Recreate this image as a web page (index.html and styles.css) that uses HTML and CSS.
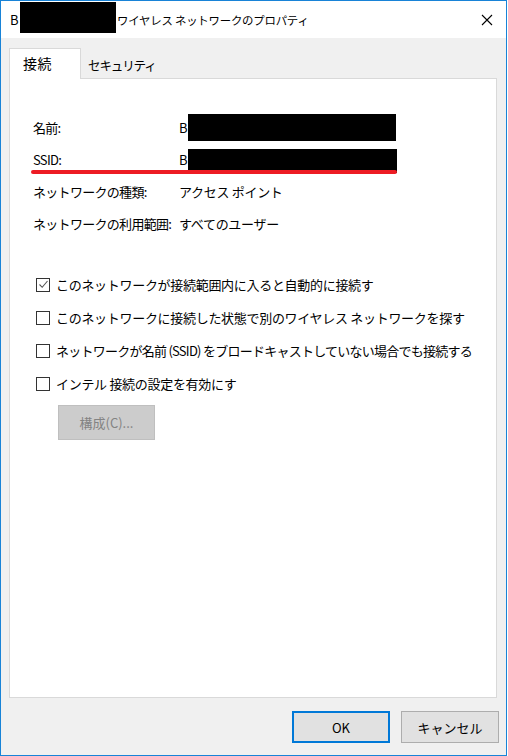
FILE: index.html
```html
<!DOCTYPE html>
<html lang="ja">
<head>
<meta charset="utf-8">
<title>ワイヤレス ネットワークのプロパティ</title>
<link rel="stylesheet" href="styles.css">
</head>
<body>
<div class="window">
  <div class="titlebar">
    <span class="title-b">B</span><span class="redact title-redact"></span><span class="title-text">ワイヤレス ネットワークのプロパティ</span>
    <svg class="close" width="12" height="12" viewBox="0 0 12 12"><path d="M1 1 L11 11 M11 1 L1 11" stroke="#000" stroke-width="1.1" fill="none"/></svg>
  </div>
  <div class="client">
    <div class="tabs">
      <div class="tab active">接続</div>
      <div class="tab">セキュリティ</div>
    </div>
    <div class="panel">
      <div class="info">
        <div class="label">名前:</div><div class="value">B<span class="redact r1"></span></div>
        <div class="label">SSID:</div><div class="value">B<span class="redact r2"></span></div>
        <div class="label">ネットワークの種類:</div><div class="value">アクセス ポイント</div>
        <div class="label">ネットワークの利用範囲:</div><div class="value">すべてのユーザー</div>
        <div class="underline"></div>
      </div>
      <div class="checks">
        <div class="check-row"><span class="box"><svg width="11" height="11" viewBox="0 0 11 11"><path d="M1.5 5.5 L4.2 8.3 L9.5 2" stroke="#555" stroke-width="1.1" fill="none"/></svg></span><span>このネットワークが接続範囲内に入ると自動的に接続す</span></div>
        <div class="check-row"><span class="box"></span><span>このネットワークに接続した状態で別のワイヤレス ネットワークを探す</span></div>
        <div class="check-row"><span class="box"></span><span class="tight">ネットワークが名前 (SSID) をブロードキャストしていない場合でも接続する</span></div>
        <div class="check-row"><span class="box"></span><span>インテル 接続の設定を有効にす</span></div>
      </div>
      <button class="config" disabled>構成(C)...</button>
    </div>
    <div class="footer">
      <button class="btn ok">OK</button>
      <button class="btn">キャンセル</button>
    </div>
  </div>
</div>
</body>
</html>
```

FILE: styles.css
```css
html, body {
  margin: 0;
  padding: 0;
  background: #ffffff;
}

body {
  font-family: "Noto Sans CJK JP", "Noto Sans", sans-serif;
  font-size: 13px;
  color: #000;
}

.window {
  box-sizing: border-box;
  width: 507px;
  height: 756px;
  border: 1px solid #1883d7;
  display: flex;
  flex-direction: column;
  background: #f0f0f0;
}

.titlebar {
  height: 37px;
  flex: none;
  background: #fff;
  display: flex;
  align-items: center;
  padding-left: 9px;
  font-size: 11.4px;
  white-space: nowrap;
}

.title-b {
  width: 10px;
  font-size: 13px;
}

.redact {
  display: inline-block;
  background: #000;
}

.title-redact {
  width: 96px;
  height: 31px;
  align-self: flex-start;
  margin-top: 1px;
}

.title-text {
  margin-left: 1px;
  letter-spacing: -0.2px;
}

.close {
  margin-left: auto;
  margin-right: 13px;
}

.client {
  flex: 1;
  display: flex;
  flex-direction: column;
  padding: 10px 9px 0 8px;
}

.tabs {
  display: flex;
  align-items: flex-end;
  height: 30px;
  position: relative;
  z-index: 1;
}

.tab {
  box-sizing: border-box;
  height: 28px;
  padding: 0 7px;
  display: flex;
  align-items: center;
  font-size: 12.6px;
  letter-spacing: -1.2px;
  white-space: nowrap;
}

.tab.active {
  height: 31px;
  width: 72px;
  padding: 0 0 2px 13px;
  background: #fff;
  border: 1px solid #d9d9d9;
  border-bottom: none;
  margin-bottom: -1px;
  font-size: 14px;
  letter-spacing: 0.5px;
}

.panel {
  box-sizing: border-box;
  height: 620px;
  background: #fff;
  border: 1px solid #d9d9d9;
  padding-top: 32px;
  letter-spacing: -0.3px;
  white-space: nowrap;
}

.info {
  position: relative;
  display: grid;
  grid-template-columns: 146px auto;
  grid-auto-rows: 32px;
  align-items: center;
  padding-left: 23px;
}

.label {
  letter-spacing: -0.7px;
}

.value {
  display: flex;
  align-items: center;
}

.r1 {
  width: 208px;
  height: 27px;
  margin-left: 1px;
  margin-top: 1px;
}

.r2 {
  width: 209px;
  height: 24px;
  margin-left: 1px;
  margin-top: 4px;
}

.underline {
  position: absolute;
  left: 21px;
  top: 59px;
  width: 366px;
  height: 4px;
  border-radius: 2px;
  background: #ed1c24;
}

.checks {
  margin-top: 29px;
}

.check-row {
  height: 33px;
  display: flex;
  align-items: center;
  padding-left: 26px;
  gap: 6px;
}

.tight {
  letter-spacing: -0.75px;
}

.box {
  box-sizing: border-box;
  flex: none;
  width: 14px;
  height: 14px;
  border: 1px solid #333;
  background: #fff;
  display: flex;
  align-items: center;
  justify-content: center;
}

.config {
  margin: 5px 0 0 48px;
  width: 97px;
  height: 35px;
  background: #cccccc;
  border: 1px solid #bfbfbf;
  color: #838383;
  font-family: inherit;
  font-size: 13px;
  padding: 0;
}

.footer {
  display: flex;
  justify-content: flex-end;
  gap: 11px;
  padding: 13px 0 0 0;
  margin-right: -2px;
}

.btn {
  box-sizing: border-box;
  width: 98px;
  height: 32px;
  background: #e1e1e1;
  border: 1px solid #adadad;
  font-family: inherit;
  font-size: 13px;
  color: #000;
  padding: 0;
}

.btn.ok {
  border: 2px solid #0078d7;
}
```
